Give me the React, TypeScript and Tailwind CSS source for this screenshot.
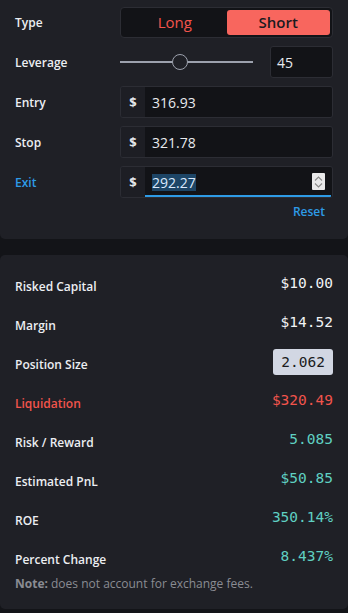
import React from "react"

const sans = "font-['Open_Sans','Noto_Sans',sans-serif]"
const mono = "font-['DejaVu_Sans_Mono','Liberation_Mono',monospace]"

function Label({ children, className = "" }: { children: React.ReactNode; className?: string }) {
    return <div className={`w-[105px] shrink-0 pt-[2px] text-[12px] font-semibold ${className}`}>{children}</div>
}

function MoneyInput({ value, focused }: { value: string; focused?: boolean }) {
    return (
        <div className="flex flex-1 h-8 rounded-[3px] border border-[#2c2d34] overflow-hidden">
            <div className="w-[24px] flex items-center justify-center pt-[1px] text-[13px] font-bold text-[#e5e7eb] bg-[#1d1e24]">$</div>
            <div className="relative flex-1 flex items-center bg-[#121317] pl-[7px] pt-[1px] text-[14px] text-[#e8eaee]">
                {focused ? (
                    <>
                        <span className="bg-[#1d4566] text-[#dbeafe] leading-[17px]">{value}</span>
                        <div className="absolute right-[7px] top-[6px] w-[13px] h-[17px] bg-[#e9e9ea] rounded-[1px] flex flex-col items-center justify-center gap-[2px]">
                            <svg width="9" height="5" viewBox="0 0 9 5" fill="none" stroke="#8a8a8a" strokeWidth="1.1"><path d="M1 4.5 L4.5 1 L8 4.5" /></svg>
                            <svg width="9" height="5" viewBox="0 0 9 5" fill="none" stroke="#8a8a8a" strokeWidth="1.1"><path d="M1 0.5 L4.5 4 L8 0.5" /></svg>
                        </div>
                        <div className="absolute left-0 right-[1px] bottom-0 h-[2px] bg-[#2e9be6]" />
                    </>
                ) : (
                    <span>{value}</span>
                )}
            </div>
        </div>
    )
}

function Stat({ label, value, labelClass = "text-[#eceef2]", valueClass = "text-[#f1f3f5]", boxed }: { label: string; value: string; labelClass?: string; valueClass?: string; boxed?: boolean }) {
    return (
        <div className="flex justify-between items-start h-[39px]">
            <div className={`mt-[6px] text-[12px] font-semibold leading-4 ${labelClass}`}>{label}</div>
            {boxed ? (
                <div className={`-mt-[2px] ${mono} text-[14.5px] leading-[20px] px-[8px] py-[3px] rounded-[3px] bg-[#d2d7e3] text-[#1b1c21]`}>{value}</div>
            ) : (
                <div className={`${mono} text-[14.5px] leading-[20px] ${valueClass}`}>{value}</div>
            )}
        </div>
    )
}

export default function App() {
    return (
        <div className={`min-h-screen bg-[#131418] ${sans}`}>
            <div className="bg-[#1f2026] rounded-b-[5px] px-[15px] pt-[6px] pb-[19px]">
                <div className="flex flex-col gap-2">
                    <div className="flex items-center h-8">
                        <Label className="text-[#eceef2]">Type</Label>
                        <div className="flex-1 h-[31px] rounded-[4px] border border-[#2c2d34] bg-[#121317] flex p-[2px]">
                            <button className="flex-1 pt-[1px] text-[15px] text-[#f2544c]">Long</button>
                            <button className="flex-1 pt-[1px] text-[15px] font-semibold text-[#1a1b20] bg-[#f8665e] rounded-[3px]">Short</button>
                        </div>
                    </div>
                    <div className="flex items-center h-8">
                        <Label className="text-[#eceef2]">Leverage</Label>
                        <div className="relative w-[133px] h-8 flex items-center">
                            <div className="w-full h-[2px] bg-[#9ca1ad]" />
                            <div className="absolute left-[52px] top-[8px] w-[16px] h-[16px] rounded-full border-[1.5px] border-[#9ca1ad] bg-[#1f2026]" />
                        </div>
                        <div className="ml-auto w-[63px] h-8 rounded-[3px] border border-[#2c2d34] bg-[#121317] flex items-center pl-[6px] pt-[1px] text-[14px] text-[#e8eaee]">45</div>
                    </div>
                    <div className="flex items-center h-8">
                        <Label className="text-[#eceef2]">Entry</Label>
                        <MoneyInput value="316.93" />
                    </div>
                    <div className="flex items-center h-8">
                        <Label className="text-[#eceef2]">Stop</Label>
                        <MoneyInput value="321.78" />
                    </div>
                    <div className="flex items-center h-8">
                        <Label className="text-[#2e9be6]">Exit</Label>
                        <MoneyInput value="292.27" focused />
                    </div>
                </div>
                <div className="flex justify-end pr-[8px] mt-[6px]">
                    <button className="text-[12px] font-semibold text-[#2e9be6] leading-4">Reset</button>
                </div>
            </div>

            <div className="mt-[16px] bg-[#1f2026] rounded-[5px] px-[15px] pt-[18px] pb-[17px]">
                <Stat label="Risked Capital" value="$10.00" />
                <Stat label="Margin" value="$14.52" />
                <Stat label="Position Size" value="2.062" boxed />
                <Stat label="Liquidation" value="$320.49" labelClass="text-[#f2544c]" valueClass="text-[#f2544c]" />
                <Stat label="Risk / Reward" value="5.085" valueClass="text-[#5fd0c2]" />
                <Stat label="Estimated PnL" value="$50.85" valueClass="text-[#5fd0c2]" />
                <Stat label="ROE" value="350.14%" valueClass="text-[#5fd0c2]" />
                <div className="flex justify-between items-start">
                    <div className="mt-[6px] text-[12px] font-semibold leading-4 text-[#eceef2]">Percent Change</div>
                    <div className={`${mono} text-[14.5px] leading-[20px] text-[#5fd0c2]`}>8.437%</div>
                </div>
                <div className="mt-[8px] text-[12px] leading-4 text-[#8a8c93]">
                    <span className="font-bold">Note:</span> does not account for exchange fees.
                </div>
            </div>
        </div>
    )
}
